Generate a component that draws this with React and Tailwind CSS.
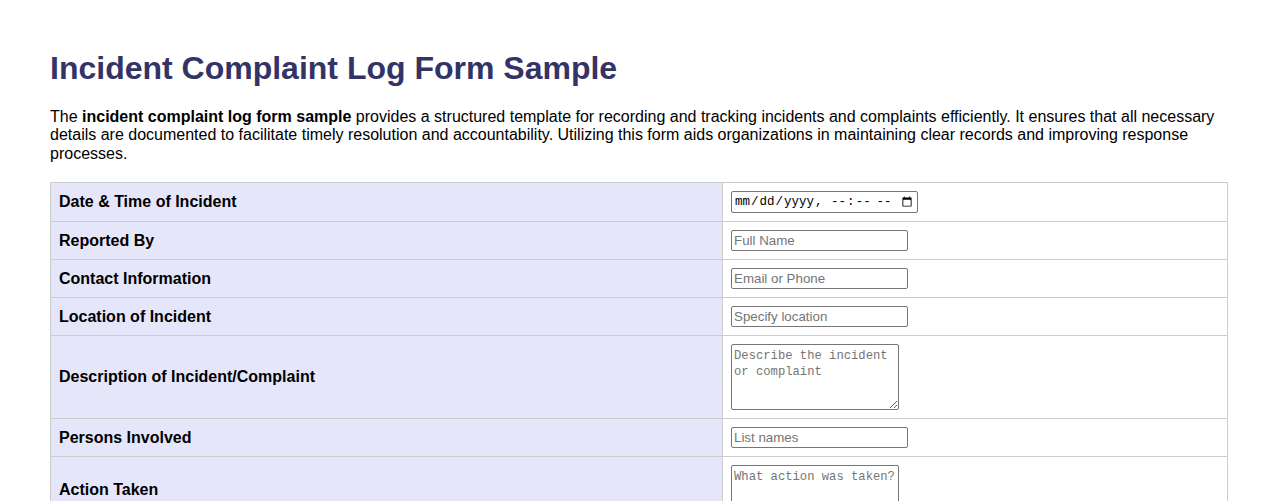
import React from "react";

// form rows: label + field kind
const rows = [
  { label: "Date & Time of Incident", type: "datetime" },
  { label: "Reported By", type: "text", placeholder: "Full Name" },
  { label: "Contact Information", type: "text", placeholder: "Email or Phone" },
  { label: "Location of Incident", type: "text", placeholder: "Specify location" },
  { label: "Description of Incident/Complaint", type: "area", rows: 4, placeholder: "Describe the incident or complaint" },
  { label: "Persons Involved", type: "text", placeholder: "List names" },
  { label: "Action Taken", type: "area", rows: 3, placeholder: "What action was taken?" },
  { label: "Resolution Status", type: "text", placeholder: "Open / Closed" },
];

const Field = ({ row }) => {
  if (row.type === "datetime") {
    return (
      <input
        type="datetime-local"
        className="block w-[187px] h-[22px] border border-[#767676] rounded-[2px] px-[2px] text-[12.5px] leading-[16px] text-black font-['Liberation_Mono',monospace]"
      />
    );
  }
  if (row.type === "area") {
    return (
      <textarea
        rows={row.rows}
        placeholder={row.placeholder}
        className={
          "block w-[168px] border border-[#767676] rounded-[2px] px-[2px] pt-[4px] text-[12.2px] leading-[15.5px] font-['Liberation_Mono',monospace] placeholder:text-[#757575] resize " +
          (row.rows === 4 ? "h-[66px]" : "h-[50px]")
        }
      />
    );
  }
  return (
    <input
      type="text"
      placeholder={row.placeholder}
      className="block w-[177px] h-[21px] border border-[#767676] rounded-[2px] px-[2px] text-[13.33px] leading-[16px] font-['Liberation_Sans',Arial,sans-serif] placeholder:text-[#757575]"
    />
  );
};

export default function App() {
  return (
    <div className="bg-white min-h-screen px-[50px] pt-[50px] pb-10 font-['Liberation_Sans',Arial,sans-serif] text-black">
      <h1 className="text-[32px] leading-[37px] font-bold text-[#333366] mb-[21px]">
        Incident Complaint Log Form Sample
      </h1>
      <p className="text-[16px] leading-[18.4px] mb-[19px]">
        The <strong>incident complaint log form sample</strong> provides a structured template for recording and tracking incidents and complaints efficiently. It ensures that all necessary details are documented to facilitate timely resolution and accountability. Utilizing this form aids organizations in maintaining clear records and improving response processes.
      </p>
      <table className="w-full border-collapse border border-[#cccccc]">
        <tbody>
          {rows.map((row) => (
            <tr key={row.label}>
              <td className="w-[672px] bg-[#e6e6fa] border border-[#cccccc] p-2 align-middle text-[16px] leading-[18px] font-bold">
                {row.label}
              </td>
              <td className="border border-[#cccccc] p-2 align-middle leading-[18px]">
                <Field row={row} />
              </td>
            </tr>
          ))}
        </tbody>
      </table>
    </div>
  );
}
